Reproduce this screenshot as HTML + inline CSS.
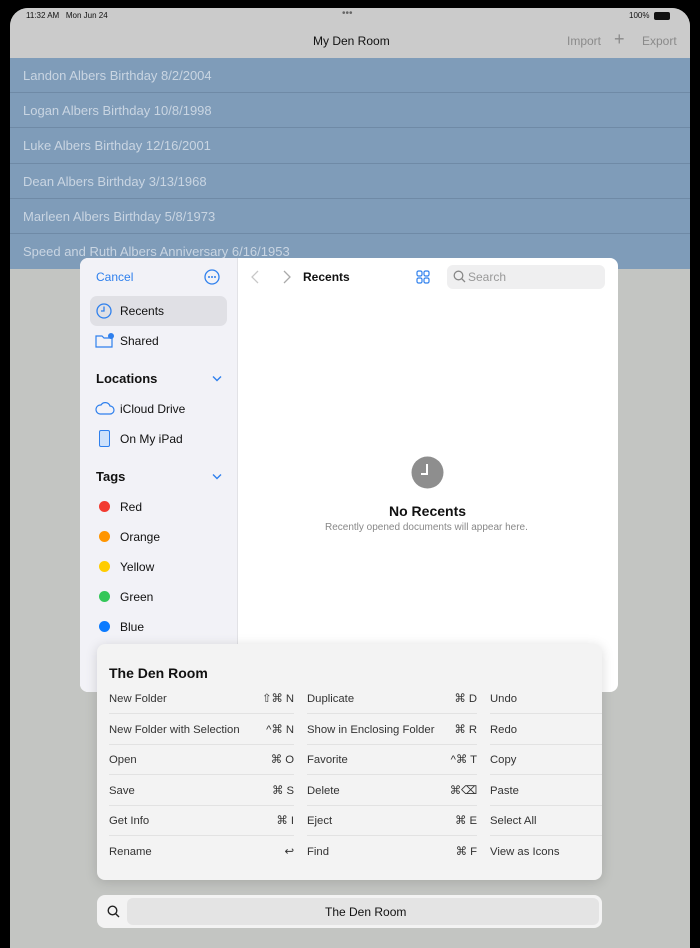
<!DOCTYPE html>
<html><head><meta charset="utf-8"><style>
*{margin:0;padding:0;box-sizing:border-box}
body{width:700px;height:934px;background:#000;position:relative;overflow:hidden;font-family:"Liberation Sans",sans-serif}
.scr{position:absolute;left:10px;top:8px;width:680px;height:940px;background:#c3c5c2;border-radius:18px 18px 0 0;overflow:hidden}
.hdr{position:absolute;left:0;top:0;width:680px;height:50px;background:#cbcbcb}
.list{position:absolute;left:0;top:50px;width:680px;height:211px;background:#7f9cb9}
.row{height:35.2px;border-bottom:1px solid #6f8aa6;color:#c9d5e2;font-size:13px;padding-left:13px;line-height:35px}
.modal{position:absolute;left:80px;top:258px;width:538px;height:434px;background:#fff;border-radius:8px;overflow:hidden}
.side{position:absolute;left:0;top:0;width:158px;height:434px;background:#f2f2f7;border-right:1px solid #e2e2e6}
.t{position:absolute;font-size:12px;color:#111}
.blue{color:#2f80ed}
.dot{position:absolute;left:19px;width:11px;height:11px;border-radius:50%}
.menu{position:absolute;left:97px;top:644px;width:505px;height:236px;background:#f3f3f3;border-radius:8px;box-shadow:0 2px 12px rgba(0,0,0,.15)}
.mi{position:absolute;font-size:11.3px;color:#333;height:30px;line-height:30px;border-bottom:1px solid #e2e2e2}
.mi span{position:absolute;right:0;top:0}
.bar{position:absolute;left:97px;top:895px;width:505px;height:33px;background:#f3f3f3;border-radius:8px}
</style></head><body>
<div class="scr">
 <div class="hdr">
  <div class="t" style="left:16px;top:3px;font-size:8px">11:32 AM&nbsp;&nbsp;&nbsp;Mon Jun 24</div>
  <div class="t" style="left:332px;top:0px;font-size:10px;color:#666">•••</div>
  <div class="t" style="left:619px;top:3px;font-size:8px">100%</div>
  <div style="position:absolute;left:644px;top:4px;width:16px;height:8px;border-radius:2px;background:#111"></div>
  <div class="t" style="left:303px;top:26px;font-size:12px">My Den Room</div>
  <div class="t" style="left:557px;top:26px;color:#8a8a8a">Import</div>
  <div class="t" style="left:604px;top:21px;color:#8a8a8a;font-size:18px;font-weight:300">+</div>
  <div class="t" style="left:632px;top:26px;color:#8a8a8a">Export</div>
 </div>
 <div class="list">
  <div class="row">Landon Albers Birthday 8/2/2004</div>
  <div class="row">Logan Albers Birthday 10/8/1998</div>
  <div class="row">Luke Albers Birthday 12/16/2001</div>
  <div class="row">Dean Albers Birthday 3/13/1968</div>
  <div class="row">Marleen Albers Birthday 5/8/1973</div>
  <div class="row" style="border:none">Speed and Ruth Albers Anniversary 6/16/1953</div>
 </div>
</div>
<div class="modal">
 <div class="side">
  <div class="t blue" style="left:16px;top:12px">Cancel</div>
  <svg style="position:absolute;left:124px;top:11px" width="16" height="16"><circle cx="8" cy="8" r="7" fill="none" stroke="#2f80ed" stroke-width="1.3"/><circle cx="5" cy="8" r="1" fill="#2f80ed"/><circle cx="8" cy="8" r="1" fill="#2f80ed"/><circle cx="11" cy="8" r="1" fill="#2f80ed"/></svg>
  <div style="position:absolute;left:10px;top:38px;width:137px;height:30px;background:#e0e0e5;border-radius:7px"></div>
  <svg style="position:absolute;left:16px;top:45px" width="16" height="16"><circle cx="8" cy="8" r="7" fill="none" stroke="#2f80ed" stroke-width="1.3"/><path d="M8 3.5V8H5" fill="none" stroke="#2f80ed" stroke-width="1.3"/></svg>
  <div class="t" style="left:40px;top:46px">Recents</div>
  <svg style="position:absolute;left:15px;top:75px" width="20" height="16"><path d="M1 3h6l2 2h8v9H1z" fill="none" stroke="#2f80ed" stroke-width="1.2"/><circle cx="16" cy="3" r="3" fill="#2f80ed"/></svg>
  <div class="t" style="left:40px;top:76px">Shared</div>
  <div class="t" style="left:16px;top:113px;font-size:13px;font-weight:bold">Locations</div>
  <svg style="position:absolute;left:132px;top:117px" width="10" height="7"><path d="M1 1.5l4 4 4-4" fill="none" stroke="#2f80ed" stroke-width="1.4"/></svg>
  <svg style="position:absolute;left:15px;top:143px" width="20" height="14"><path d="M5 13h10a4 4 0 0 0 0-8 5 5 0 0 0-9-1 4.5 4.5 0 0 0-1 9z" fill="none" stroke="#2f80ed" stroke-width="1.2"/></svg>
  <div class="t" style="left:40px;top:144px">iCloud Drive</div>
  <div style="position:absolute;left:19px;top:172px;width:11px;height:17px;border:1.3px solid #2f80ed;border-radius:2px;background:#cfe2fb"></div>
  <div class="t" style="left:40px;top:174px">On My iPad</div>
  <div class="t" style="left:16px;top:211px;font-size:13px;font-weight:bold">Tags</div>
  <svg style="position:absolute;left:132px;top:215px" width="10" height="7"><path d="M1 1.5l4 4 4-4" fill="none" stroke="#2f80ed" stroke-width="1.4"/></svg>
  <div class="dot" style="top:243px;background:#f23a30"></div><div class="t" style="left:40px;top:242px">Red</div>
  <div class="dot" style="top:273px;background:#ff9500"></div><div class="t" style="left:40px;top:272px">Orange</div>
  <div class="dot" style="top:303px;background:#ffcc00"></div><div class="t" style="left:40px;top:302px">Yellow</div>
  <div class="dot" style="top:333px;background:#34c759"></div><div class="t" style="left:40px;top:332px">Green</div>
  <div class="dot" style="top:363px;background:#0a7aff"></div><div class="t" style="left:40px;top:362px">Blue</div>
 </div>
 <svg style="position:absolute;left:171px;top:12px" width="8" height="14"><path d="M7 1L1 7l6 6" fill="none" stroke="#c8c8c8" stroke-width="1.3"/></svg>
 <svg style="position:absolute;left:203px;top:12px" width="8" height="14"><path d="M1 1l6 6-6 6" fill="none" stroke="#aaa" stroke-width="1.3"/></svg>
 <div class="t" style="left:223px;top:12px;font-weight:bold">Recents</div>
 <svg style="position:absolute;left:336px;top:12px" width="14" height="14" fill="none" stroke="#2f80ed" stroke-width="1.2"><rect x="1" y="1" width="5" height="5" rx="1.5"/><rect x="8" y="1" width="5" height="5" rx="1.5"/><rect x="1" y="8" width="5" height="5" rx="1.5"/><rect x="8" y="8" width="5" height="5" rx="1.5"/></svg>
 <div style="position:absolute;left:367px;top:7px;width:158px;height:24px;background:#efeff0;border-radius:6px"></div>
 <svg style="position:absolute;left:373px;top:12px" width="13" height="13" fill="none" stroke="#888" stroke-width="1.3"><circle cx="5.5" cy="5.5" r="4.3"/><path d="M8.7 8.7L12 12"/></svg>
 <div class="t" style="left:388px;top:12px;color:#999">Search</div>
 <svg style="position:absolute;left:331px;top:198px" width="33" height="33"><circle cx="16.5" cy="16.5" r="16" fill="#8e8e8e"/><path d="M16 8v10h-6" fill="none" stroke="#fff" stroke-width="2"/></svg>
 <div class="t" style="left:309px;top:245px;font-size:14px;font-weight:bold">No Recents</div>
 <div class="t" style="left:245px;top:264px;font-size:10px;color:#888">Recently opened documents will appear here.</div>
</div>
<div class="menu">
 <div class="t" style="left:12px;top:21px;font-size:14px;font-weight:bold">The Den Room</div>
 <div class="mi" style="left:12px;top:40px;width:185px">New Folder<span>⇧⌘ N</span></div>
 <div class="mi" style="left:12px;top:71px;width:185px">New Folder with Selection<span>^⌘ N</span></div>
 <div class="mi" style="left:12px;top:101px;width:185px">Open<span>⌘ O</span></div>
 <div class="mi" style="left:12px;top:132px;width:185px">Save<span>⌘ S</span></div>
 <div class="mi" style="left:12px;top:162px;width:185px">Get Info<span>⌘ I</span></div>
 <div class="mi" style="left:12px;top:193px;width:185px;border:none">Rename<span>↩</span></div>
 <div class="mi" style="left:210px;top:40px;width:170px">Duplicate<span>⌘ D</span></div>
 <div class="mi" style="left:210px;top:71px;width:170px">Show in Enclosing Folder<span>⌘ R</span></div>
 <div class="mi" style="left:210px;top:101px;width:170px">Favorite<span>^⌘ T</span></div>
 <div class="mi" style="left:210px;top:132px;width:170px">Delete<span>⌘⌫</span></div>
 <div class="mi" style="left:210px;top:162px;width:170px">Eject<span>⌘ E</span></div>
 <div class="mi" style="left:210px;top:193px;width:170px;border:none">Find<span>⌘ F</span></div>
 <div class="mi" style="left:393px;top:40px;width:112px">Undo</div>
 <div class="mi" style="left:393px;top:71px;width:112px">Redo</div>
 <div class="mi" style="left:393px;top:101px;width:112px">Copy</div>
 <div class="mi" style="left:393px;top:132px;width:112px">Paste</div>
 <div class="mi" style="left:393px;top:162px;width:112px">Select All</div>
 <div class="mi" style="left:393px;top:193px;width:112px;border:none">View as Icons</div>
</div>
<div class="bar">
 <svg style="position:absolute;left:10px;top:10px" width="13" height="13" fill="none" stroke="#222" stroke-width="1.4"><circle cx="5.5" cy="5.5" r="4.3"/><path d="M8.7 8.7L12 12"/></svg>
 <div style="position:absolute;left:30px;top:3px;width:472px;height:27px;background:#e4e4e4;border-radius:6px"></div>
 <div class="t" style="left:228px;top:10px">The Den Room</div>
</div>
</body></html>
